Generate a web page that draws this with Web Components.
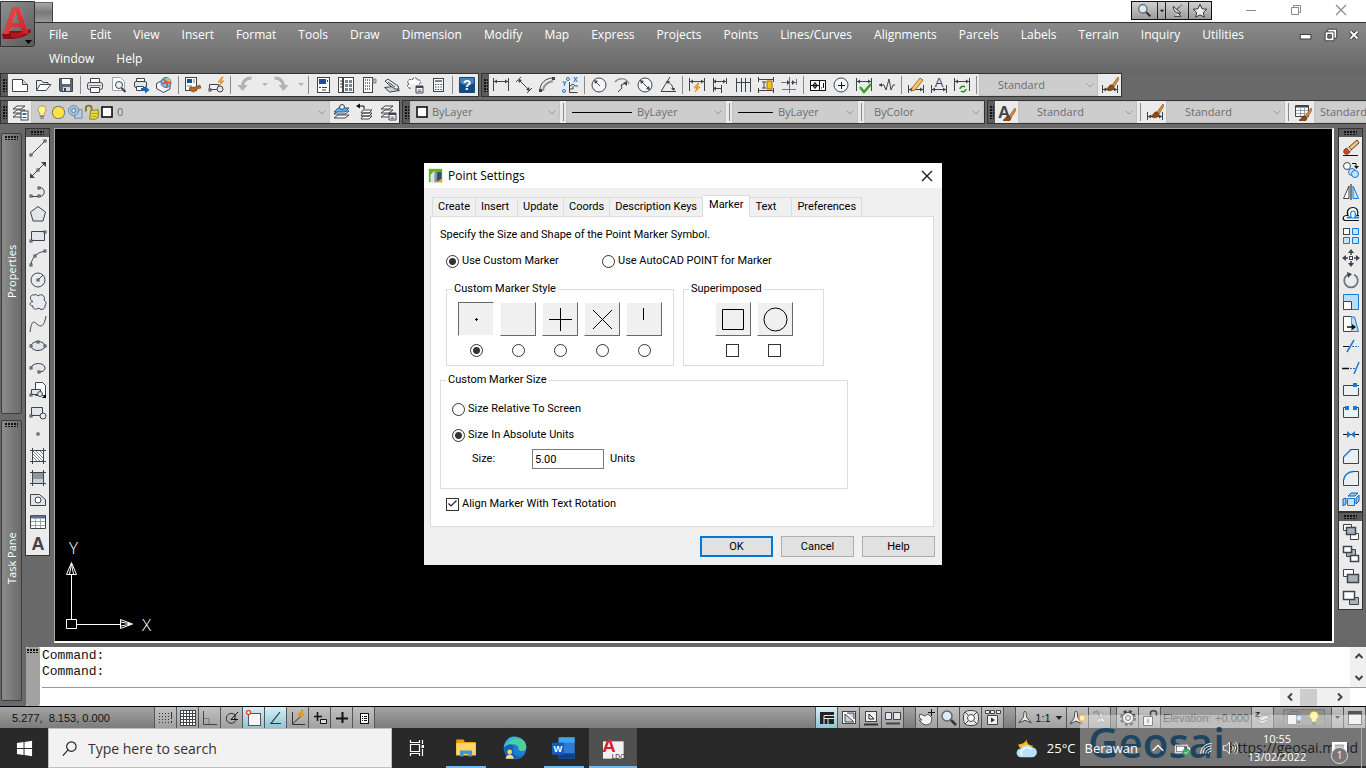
<!DOCTYPE html>
<html lang="en">
<head>
<meta charset="utf-8">
<title>Point Settings</title>
<style>
  html, body {
    height: 100%;
    margin: 0;
    overflow: hidden;
    background: #696969;
    font-family: "Open Sans", "Noto Sans", sans-serif;
    font-size: 12px;
  }
</style>
</head>
<body>
<cad-desktop></cad-desktop>

<script>
const INK = "#3f444c";
const BLUE = "#1a78d6";

// every drawing sits in an 18 x 18 box
const sq = (x, y) => `<rect x="${x - 1}" y="${y - 1}" width="2" height="2" fill="#fff" stroke="${INK}"/>`;
const brush = `<path d="M17 1l-6 8 2 2 5-8z" fill="#d98b3a" stroke="#6b3a12" stroke-width=".5"/><path d="M11 9c-3-1-3 3-6 4 2 3 8 2 8-2z" fill="#8a4a16" stroke="#53290a" stroke-width=".5"/>`;
const bolt = (x, y) => `<path d="M${x + 4} ${y}l-4 5h3l-2 4 5-5h-3l2-4z" fill="#ffb400" stroke="#d97400" stroke-width=".6"/>`;
const bulb = `<path d="M9 2a4.500 4.500 0 0 0-2.500 8.200V13h5v-2.800A4.500 4.500 0 0 0 9 2z" fill="#fff3a0" stroke="#b79a28"/><path d="M7 14h4M7 16h4" stroke="#555"/>`;
const sheets = `<path d="M6 3h8l-4 3H2zM6 7h8l-4 3H2zM6 11h8l-4 3H2z" fill="#fff" stroke="${INK}"/>`;
const miniPanel = `<path d="M10 10h7v7h-7z" fill="#fff" stroke="${INK}"/><path d="M10 11h7" stroke="${INK}" stroke-width="2"/><path d="M11.500 14h4M11.500 15.500h4" stroke="#6b7686"/>`;
const dimBase = `<path d="M1.500 2v13M16.500 2v13M2 5.500h14" stroke="${INK}"/><path d="M5 3.500v4l-3-2zM13 3.500v4l3-2z" fill="${INK}"/>`;
const dimLow = `<path d="M1.500 9v8M16.500 9v8M2 13.500h14" stroke="${INK}"/><path d="M5 11.500v4l-3-2zM13 11.500v4l3-2z" fill="${INK}"/>`;

const ICONS = {
  new: `<path d="M1.500 3.500h10l5 5v7h-15z" fill="#fff" stroke="${INK}"/><path d="M11.500 3.500v5h5" fill="#d5dae2" stroke="${INK}"/>`,
  open: `<path d="M2.500 14V4.500h5l1.500 2h5V9" fill="#e9edf2" stroke="${INK}"/><path d="M2.500 14.500l3.500-6h11l-5 6z" fill="#fff" stroke="${INK}"/>`,
  save: `<path d="M2.500 2.500h13v13h-12l-1-1z" fill="#5d6673" stroke="${INK}"/><path d="M5 3h8v5H5z" fill="#fff"/><path d="M6 11h7v4H6z" fill="#d5dae2"/><path d="M7 12h2v3H7z" fill="${INK}"/>`,
  print: `<path d="M4.500 7V2.500h9V7" fill="#fff" stroke="${INK}"/><rect x="1.500" y="6.500" width="15" height="7" rx="2" fill="#e2e5ea" stroke="${INK}"/><path d="M4.500 11.500h9v5h-9z" fill="#fff" stroke="${INK}"/><path d="M3 9.500h12" stroke="#7a828d"/>`,
  preview: `<path d="M3.500 1.500h8l4 4v9h-12z" fill="#fff" stroke="#9ba2ac"/><circle cx="10" cy="9" r="3.500" fill="#e8f2fa" stroke="${INK}"/><path d="M12.500 12l4 4" stroke="${INK}" stroke-width="2"/>`,
  publish: `<path d="M4.500 6V2.500h8V6" fill="#fff" stroke="${INK}"/><rect x="2.500" y="5.500" width="12" height="6" rx="1.500" fill="#e2e5ea" stroke="${INK}"/><path d="M4.500 10.500h7v4h-7z" fill="#fff" stroke="${INK}"/><path d="M9 12h4v-2l4.500 4-4.500 3.500V15H9z" fill="#1465c0"/>`,
  globe: `<path d="M1.500 7.500L8 4l7 4v5l-6.500 3.500-7-4z" fill="#f2f4f6" stroke="${INK}"/><circle cx="11" cy="6.500" r="5" fill="#6ec3e8" stroke="#2c7fa8"/><path d="M8 3c3 2 5 5 4 8M7 8c3-2 6-2 9-1" fill="none" stroke="#e0482c" stroke-width="1.500"/><path d="M12 2.500l3 3" stroke="#f6c628" stroke-width="2"/>`,
  match: `<rect x="1.500" y="1.500" width="11" height="13" fill="#fff" stroke="${INK}"/><path d="M3 3h5v4H3z" fill="#1b4f94"/><path d="M9 4h2M9 6h2M3 10h5" stroke="#6b7686"/><path d="M6 11h5l5-2 1 3-4 1c-2 4-5 4-8 0z" fill="#b8661c" stroke="#6b3a12" stroke-width=".5"/>`,
  blockedit: `<path d="M2.500 8.500h9v5h-9z" fill="#eef1f5" stroke="${INK}"/>${sq(3, 14)}<circle cx="13" cy="13" r="3" fill="#dfe4ea" stroke="${INK}"/>${bolt(11, 1)}`,
  undo: `<path d="M15.500 2C10 2 7 5 6.500 10" fill="none" stroke="#b2b2b2" stroke-width="3"/><path d="M1.500 9h10l-5 6z" fill="#b2b2b2"/>`,
  redo: `<path d="M2.500 2C8 2 11 5 11.500 10" fill="none" stroke="#b2b2b2" stroke-width="3"/><path d="M6.500 9h10l-5 6z" fill="#b2b2b2"/>`,
  drop: `<path d="M6 7h6l-3 3z" fill="#b0b4ba"/>`,
  palette: `<rect x="3.500" y="1.500" width="12" height="15" fill="#fff" stroke="${INK}"/><path d="M5 3h7v5H5z" fill="#1b4f94"/><path d="M13.500 4v2M5 11.500h2M8 11.500h5M8 14h4" stroke="${INK}"/>`,
  center: `<rect x="1.500" y="1.500" width="4" height="15" fill="#fff" stroke="${INK}"/><rect x="6.500" y="1.500" width="10" height="15" fill="#fff" stroke="${INK}"/><path d="M8 4h3v3H8zM12 4h3v3h-3zM8 8h3v3H8zM12 8h3v3h-3zM8 12h3v3H8zM12 12h3v3h-3z" fill="#7b8492"/><path d="M3 5h2M3 8h2M3 11h2" stroke="${INK}"/>`,
  toolpal: `<rect x="3.500" y="1.500" width="9" height="15" fill="#fff" stroke="${INK}"/><path d="M13 3h3v4h-3z" fill="#b9bfc8" stroke="#7a828d"/><path d="M5 4h6M5 7h6M5 10h6M5 13h6" stroke="#7b8492" stroke-width="2" stroke-dasharray="1 1"/>`,
  sheetset: `<path d="M1.500 11.500l9-1 6 4-10 1.500z" fill="#cdd3db" stroke="${INK}"/><path d="M2 5l3-2 10 7 1 3-4 0-7-5z" fill="#e9edf2" stroke="${INK}"/><path d="M5 6l7 5" stroke="${INK}"/>`,
  markup: `<path d="M3 8c-3-2 0-6 3-4 1-3 5-3 5 0 4-1 5 3 2 4M3 8c-3 1-1 5 2 4" fill="#fff" stroke="${INK}" stroke-dasharray="3 1"/>${miniPanel}`,
  calc: `<rect x="4.500" y="2.500" width="10" height="13" fill="#fff" stroke="${INK}"/><path d="M6 5h7" stroke="#7b8492" stroke-width="2"/><path d="M6 8.500h7M6 11h7M6 13.500h7" stroke="${INK}" stroke-dasharray="1.500 1.200"/>`,
  help: `<rect x="1" y="1" width="16" height="16" rx="1" fill="#134a82"/><path d="M2 2h14v5c-5 3-9 3-14 0z" fill="#3f82bf"/><text x="9" y="14" font-size="14" font-weight="700" text-anchor="middle" fill="#fff">?</text>`,

  dlinear: dimBase,
  daligned: `<path d="M1 6l5-5M12 17l5-5M4 4l10 10" stroke="${INK}"/><path d="M3 3l4 1-3 3zM15 15l-4-1 3-3z" fill="${INK}"/>`,
  darc: `<path d="M2 14C2 7 8 2 15 2" fill="none" stroke="${INK}"/><path d="M5 15C5 10 9 6 15 5" fill="none" stroke="#8b929c" stroke-width="2"/><path d="M1 13h3v3H1zM14 1h3v3h-3z" fill="${INK}"/>`,
  dord: `<path d="M8.500 6v10.500h8M9 10l3-2 2 2h3M8 13h4v-3" fill="none" stroke="${INK}"/><text x="1" y="10" font-size="7" font-weight="700" fill="${BLUE}">Y</text><text x="12" y="6" font-size="7" font-weight="700" fill="${BLUE}">X</text><circle cx="7" cy="3" r="1.500" fill="none" stroke="${BLUE}"/><circle cx="3" cy="15" r="1.500" fill="none" stroke="${BLUE}"/>`,
  dradius: `<circle cx="9" cy="9" r="7" fill="#f4f6f8" stroke="${INK}"/><path d="M5 5l5 5" stroke="${INK}"/><path d="M4 4l4 1-3 3z" fill="${INK}"/>`,
  djog: `<path d="M2 6C6 1 14 2 16 8" fill="none" stroke="#8b929c" stroke-width="1.500"/><path d="M5 16l4-4-1-3 5-2" fill="none" stroke="${INK}"/><path d="M14 5v5l-4-3z" fill="${INK}"/>`,
  ddiam: `<circle cx="9" cy="9" r="7" fill="#f4f6f8" stroke="${INK}"/><path d="M4 4l10 10" stroke="${INK}"/><path d="M4 4l4 1-3 3zM14 14l-4-1 3-3z" fill="${INK}"/>`,
  dang: `<path d="M11 1L2 15.500h15" fill="none" stroke="${INK}"/><path d="M8 6c4 1 6 4 6 8" fill="none" stroke="${INK}"/><path d="M7 5l4 0-2 3zM15 15l-3-3h4z" fill="${INK}"/>`,
  dquick: `${dimBase}${bolt(6, 7)}`,
  dbase: `<path d="M2.500 2v14M15.500 2v6M10.500 9v8M3 5.500h12M3 12.500h7" stroke="${INK}"/><path d="M5 3.500v4l-3-2zM12 3.500v4l3-2zM5 10.500v4l-3-2z" fill="${INK}"/>`,
  dcont: `<path d="M2.500 2v14M7.500 2v14M11.500 2v14M16.500 2v14M2 6.500h15" stroke="${INK}"/>`,
  dspace: `<path d="M1.500 1v5M16.500 1v5M2 3.500h14M1.500 12v5M16.500 12v5M2 14.500h14M5 6h4M5 12h4M7 6v6" stroke="${INK}"/><path d="M10 5h5v8h-5z" fill="#ffc21a" stroke="#a56a00"/>`,
  dbreak: `<path d="M1 6.500h6M11 6.500h6M2 13.500h14M9.500 1v16M16.500 3v6" stroke="#6e757f"/><path d="M7 4v5l3-2.500zM12 4v5l3-2.500z" fill="${INK}"/>`,
  tol: `<rect x="1.500" y="4.500" width="15" height="10" fill="#fff" stroke="#111"/><path d="M10.500 5v9M2 9.500h8M6 6v7M14.500 7v5M12 12h1" stroke="#111"/><circle cx="6" cy="9.500" r="2" fill="none" stroke="#111"/>`,
  cmark: `<circle cx="9" cy="9" r="7" fill="#f4f6f8" stroke="${INK}"/><path d="M6 9.500h7M9.500 6v7" stroke="#111"/>`,
  inspect: `${dimBase}<path d="M5 11l4 5 7-8" fill="none" stroke="#3aa51f" stroke-width="2.500"/>`,
  jogline: `<path d="M1 9h5l2 5 3-11 2 11 2-5h2" fill="none" stroke="${INK}"/><path d="M1 9l3-2v4z" fill="${INK}"/>`,
  dedit: `${dimLow}<path d="M5 12l8-10 3 2-8 10-4 1z" fill="#ffc860" stroke="#8a4a16" stroke-width=".8"/>`,
  dtext: `${dimLow}<text x="9" y="11" font-size="13" text-anchor="middle" fill="${INK}">A</text>`,
  dupdate: `${dimBase}<path d="M7 13a3 3 0 0 1 5-2M13 13a3 3 0 0 1-5 2" fill="none" stroke="#2c8a1c" stroke-width="1.500"/>`,
  dstyle: `${dimLow}${brush}`,
  tstyle: `<text x="0" y="15" font-size="17" font-weight="700" fill="${INK}">A</text><g transform="translate(0 4)">${brush}</g>`,
  tabstyle: `<path d="M1.500 2.500h13v11h-13z" fill="#fff" stroke="${INK}"/><path d="M1.500 3.500h13" stroke="${INK}" stroke-width="2"/><path d="M2 7.500h12M2 10.500h12M6.500 4v9M10.500 4v9" stroke="#9aa2ad"/><g transform="translate(0 4)">${brush}</g>`,

  layers: `${sheets}<rect x="10" y="8" width="7" height="9" fill="#fff" stroke="${INK}"/><path d="M11.500 10h4v2h-4z" fill="${BLUE}"/><path d="M11.500 14.500h4" stroke="${INK}"/>`,
  layobj: `<path d="M5 8h11l-4 3H1zM5 12h11l-4 3H1z" fill="#fff" stroke="${INK}"/><path d="M5 5h11l-4 4H1z" fill="#5fb1ee" stroke="#1563a8"/><circle cx="9" cy="4" r="2.500" fill="#e8ebef" stroke="${INK}"/>`,
  layprev: `<path d="M7 7h9l-3 3H5zM7 10h9l-3 3H5zM7 13h9l-3 3H5z" fill="#fff" stroke="${INK}"/><path d="M1 3h7v3" fill="none" stroke="#111"/><path d="M0 3l4-2.500v5z" fill="#111"/>`,
  laystate: sheets + miniPanel,
  bulb,
  sun: `<circle cx="9" cy="9" r="6.500" fill="#ffe23c" stroke="#4f6f8e"/><path d="M3 3l2 2M15 3l-2 2M3 15l2-2M15 15l-2-2" stroke="#e0a800"/>`,
  freeze: `<path d="M8 6h8v9H8z" fill="#b9cfe0" stroke="#6c8aa5"/><circle cx="7" cy="7" r="5.500" fill="#9dbdd6" stroke="#54799b" stroke-dasharray="2 1"/><circle cx="7" cy="7" r="2" fill="#dce9f3" stroke="#54799b"/>`,
  lock: `<path d="M2 8V4c0-3 6-3 6 0v2" fill="none" stroke="#7d7a13" stroke-width="2"/><path d="M7 7l8-1v8l-3 2H6z" fill="#e4df3b" stroke="#7d7a13"/><path d="M8 10h6M8 13h5" stroke="#a39f1e"/>`,
  swatch: `<rect x="4" y="4" width="10" height="10" fill="#fff" stroke="#000" stroke-width="1.500"/>`,

  line: `<path d="M3 15L15 3" stroke="${INK}"/>${sq(2, 16)}${sq(16, 2)}`,
  xline: `<path d="M3 15L15 3" stroke="${INK}"/>${sq(9, 9)}<path d="M17 1v5l-5-5zM1 17v-5l5 5z" fill="${INK}"/>`,
  pline: `<path d="M2 13.500h8c7 0 7-9 0-9" fill="none" stroke="${INK}"/>${sq(2, 13)}${sq(10, 13)}${sq(10, 5)}`,
  polygon: `<path d="M9 1.500l7.500 5.500-2.500 9H4L1.500 7z" fill="#e2e6eb" stroke="${INK}"/>`,
  rect: `<path d="M2.500 4.500h13v9h-13z" fill="#e2e6eb" stroke="${INK}"/>${sq(16, 5)}${sq(2, 14)}`,
  arc: `<path d="M2 15C3 9 8 3 15 2.500" fill="none" stroke="${INK}"/>${sq(2, 16)}${sq(6, 7)}${sq(16, 2)}`,
  circle: `<circle cx="9" cy="9" r="7" fill="#e8ebef" stroke="${INK}"/><path d="M9 9l5-5" stroke="${INK}"/>${sq(9, 9)}`,
  cloud: `<path d="M4 8.500C0 7 1 1 5 2c2-1 3 0 4 1 3-3 8 0 6 4 3 2 2 5 1 5 1 4-4 6-6 3-3 2-7 1-6-2-4 0-4-4 0-4.500z" fill="#e8ebef" stroke="${INK}"/>`,
  spline: `<path d="M1 17C3 2 6 8 9 10s6 2 8-9" fill="none" stroke="${INK}"/>`,
  ellipse: `<ellipse cx="9" cy="9" rx="7" ry="4.500" fill="#e2e6eb" stroke="${INK}"/>${sq(2, 9)}${sq(16, 9)}${sq(9, 5)}`,
  earc: `<path d="M2 9c1-6 14-6 14 0 0 3-3 4-7 4" fill="#e2e6eb" stroke="${INK}"/>${sq(2, 9)}${sq(10, 13)}`,
  insert: `<path d="M6.500 1.500h7l3 3v10h-10z" fill="#fff" stroke="${INK}"/><path d="M2.500 8.500h9v5h-9z" fill="#e2e6eb" stroke="${INK}"/><circle cx="11" cy="13" r="2.500" fill="#dfe4ea" stroke="${INK}"/>${sq(2, 14)}<path d="M17 13v4h-4z" fill="#000"/>`,
  block: `<path d="M2.500 4.500h11v8h-11z" fill="#e2e6eb" stroke="${INK}"/><circle cx="14" cy="13" r="3" fill="#e8ebef" stroke="${INK}"/>${sq(2, 13)}`,
  point: sq(9, 9),
  hatch: `<path d="M4 4h10v10H4z" fill="#fff"/><path d="M4 7l7 7M4 4l10 10M7 4l7 7M4 10l4 4M11 4l3 3" stroke="#7b8492"/><path d="M3.500 1v16M14.500 1v16M1 3.500h16M1 14.500h16" stroke="${INK}"/>`,
  gradient: `<path d="M4 4h10v10H4z" fill="#8d959f"/><path d="M4 10h10v4H4z" fill="#c9ced5"/><path d="M3.500 1v16M14.500 1v16M1 3.500h16M1 14.500h16" stroke="${INK}"/>`,
  region: `<path d="M1.500 3.500h9l6 5v6h-15z" fill="#e2e6eb" stroke="${INK}"/><circle cx="9" cy="9" r="3" fill="#fff" stroke="${INK}"/>`,
  table: `<path d="M1.500 2.500h15v13h-15z" fill="#fff" stroke="${INK}"/><path d="M2 4h14" stroke="#5a6f8c" stroke-width="3"/><path d="M2 8.500h14M2 12.500h14M6.500 6v9M11.500 6v9" stroke="#9aa2ad"/>`,
  mtext: `<text x="9" y="15" font-size="18" font-weight="700" text-anchor="middle" fill="${INK}">A</text>`,

  erase: `<path d="M1 16.500h15" stroke="#111"/><path d="M15 1l2 3-8 7-2-3z" fill="#f4c27c" stroke="#6b3a12"/><path d="M7 8l2 3-1 2-3-4z" fill="#eee" stroke="#555" stroke-width=".5"/><path d="M4 9l4 4-2 2c-3 1-5-1-4-4z" fill="#d2491d" stroke="#6b1f0a" stroke-width=".7"/>`,
  copy: `<circle cx="5" cy="5" r="3.500" fill="#fff" stroke="${INK}"/><circle cx="10" cy="11" r="3.500" fill="#c5e3f8" stroke="${BLUE}"/><circle cx="13" cy="13" r="3.500" fill="#c5e3f8" stroke="${BLUE}"/><path d="M10 2.500h4V5" fill="none" stroke="#111"/><path d="M12 5h5l-2.500 3z" fill="#111"/>`,
  mirror: `<path d="M1.500 15.500H7V3z" fill="#fff" stroke="${INK}"/><path d="M16.500 15.500H11V3z" fill="#c5e3f8" stroke="${BLUE}"/><path d="M9 1v16" stroke="#111"/>`,
  offset: `<path d="M17 15.500H3c-3-1-2-5 1-5h2c-2-5 1-8 5-8s6 4 4 8h2" fill="#fff" stroke="#111" stroke-width="1.200"/><path d="M17 13H6c-1 0-1-1 0-1h3c-1-4 0-6 2-6s3 2 2 6h4" fill="none" stroke="${BLUE}" stroke-width="1.200"/>`,
  array: `<rect x="1.500" y="1.500" width="6" height="6" fill="#fff" stroke="${INK}"/><path d="M10.500 1.500h6v6h-6zM1.500 10.500h6v6h-6zM10.500 10.500h6v6h-6z" fill="#c5e3f8" stroke="${BLUE}"/>`,
  move: `<path d="M9 2v14M2 9h14" stroke="${INK}" stroke-width="1.500" stroke-dasharray="4 6"/><path d="M9 0l3 4H6zM9 18l3-4H6zM0 9l4-3v6zM18 9l-4-3v6z" fill="${INK}"/><rect x="7.500" y="7.500" width="3" height="3" fill="#fff" stroke="${INK}"/>`,
  rotate: `<path d="M12 3.500A6.800 6.800 0 1 1 6 3.500" fill="none" stroke="#6e757f" stroke-width="1.800"/><path d="M5 1l5 2-4 4z" fill="${INK}"/>`,
  scale: `<path d="M1.500 1.500h15v15h-15z" fill="#b9def5" stroke="${BLUE}"/><path d="M1.500 8.500h8v8h-8z" fill="#fff" stroke="${INK}"/>`,
  stretch: `<path d="M1.500 1.500h8v15h-8z" fill="#fff" stroke="${INK}"/><path d="M9.500 2h3l4 14.500h-7" fill="#b9def5" stroke="${BLUE}"/><path d="M5 12h6" stroke="#111" stroke-width="1.500"/><path d="M10 9l4 3-4 3z" fill="#111"/>`,
  trim: `<path d="M1 9.500h6" stroke="#111"/><path d="M10 9.500h7" stroke="${BLUE}" stroke-dasharray="2 1"/><path d="M5 15l7-12" stroke="${BLUE}" stroke-width="1.500"/>`,
  extend: `<path d="M0 9.500h7" stroke="#111" stroke-width="1.500"/><path d="M8 9.500h5" stroke="${BLUE}" stroke-dasharray="2 1"/><path d="M12 15l5-12" stroke="${BLUE}" stroke-width="1.500"/>`,
  breakpt: `<path d="M17 4.500H1.500v10h15V7" fill="#eef1f4" stroke="${INK}"/><path d="M11 2h4v4h-4z" fill="${BLUE}"/>`,
  breaks: `<path d="M3 4.500H1.500v10h15v-10H15" fill="#eef1f4" stroke="${INK}"/><path d="M3 3h4v4H3zM11 3h4v4h-4z" fill="${BLUE}"/>`,
  join: `<path d="M1 9.500h16" stroke="#111"/><path d="M5 6l4 3.500L5 13zM13 6L9 9.500l4 3.500z" fill="${BLUE}"/>`,
  chamfer: `<path d="M8 2.500h8.500v14h-15V10" fill="#eceff2" stroke="${INK}"/><path d="M1.500 10L9 2.500" stroke="${BLUE}" stroke-width="1.500"/>`,
  fillet: `<path d="M11 2.500h5.500v14h-15V11" fill="#eceff2" stroke="${INK}"/><path d="M1.500 11c1-5 4-8 10-8.500" fill="none" stroke="${BLUE}" stroke-width="1.500"/>`,
  explode: `<path d="M5.500 7.500h7v7h-7z" fill="#c5e3f8" stroke="${BLUE}"/><path d="M1 8l3-1v6l-3 2zM6 5l3-3h7l-3 3zM14 7l3-3v6l-3 3z" fill="#8fcdf3" stroke="#1563a8"/>`,
  front: `<path d="M1.500 1.500h8v6h-8zM8.500 10.500h8v6h-8z" fill="#fff" stroke="${INK}"/><path d="M4.500 4.500h9v7h-9z" fill="#aab1ba" stroke="${INK}" stroke-width="1.500"/>`,
  back: `<path d="M4.500 4.500h9v7h-9z" fill="#aab1ba" stroke="${INK}"/><path d="M1.500 1.500h8v6h-8zM8.500 10.500h8v6h-8z" fill="#fff" stroke="${INK}" stroke-width="1.500"/>`,
  above: `<path d="M1.500 2.500h10v7h-10z" fill="#fff" stroke="${INK}"/><path d="M5.500 7.500h11v8h-11z" fill="#aab1ba" stroke="${INK}" stroke-width="1.500"/>`,
  under: `<path d="M7.500 8.500h9v7h-9z" fill="#aab1ba" stroke="${INK}"/><path d="M1.500 2.500h11v8h-11z" fill="#fff" stroke="${INK}" stroke-width="1.500"/>`,

  snap: `<path d="M2 4.500h10M2 7.500h10M2 10.500h10M2 13.500h10" stroke="#333" stroke-dasharray="1 2"/><path d="M14.500 3v11" stroke="#333" stroke-dasharray="7 2"/>`,
  grid: `<rect x="1.500" y="1.500" width="15" height="15" fill="#fff" stroke="${INK}"/><path d="M4.500 2v14M7.500 2v14M10.500 2v14M13.500 2v14M2 4.500h14M2 7.500h14M2 10.500h14M2 13.500h14" stroke="${INK}"/>`,
  ortho: `<path d="M2.500 2v13.500H16" fill="none" stroke="${INK}"/><path d="M3 9.500h5V15" fill="none" stroke="#6b7f94"/>`,
  polar: `<path d="M13 11a5 5 0 1 1-1-5" fill="none" stroke="#333"/><path d="M15 3L8 10.500h7M12 6v5" fill="none" stroke="#111"/>`,
  osnap: `<rect x="3.500" y="4.500" width="12" height="12" fill="#f4f7f9" stroke="#555"/><circle cx="3.500" cy="3.500" r="2" fill="#fff" stroke="#e2561b" stroke-width="1.500"/>`,
  otrack: `<path d="M13 3L4 14.500h10" fill="none" stroke="#1a3a48" stroke-width="1.200"/>`,
  ducs: `<path d="M3.500 3v12.500H16M3.500 15L14 5" fill="none" stroke="#333"/>${bolt(9, 1)}`,
  dyn: `<path d="M3 7.500h8M6.500 3v9" stroke="#111" stroke-width="1.500"/><path d="M9.500 10.500h6v4h-6z" fill="#ddd" stroke="#111"/>`,
  lwt: `<path d="M3 9.500h12M9.500 3v11" stroke="#111" stroke-width="2"/>`,
  qp: `<rect x="5.500" y="4.500" width="8" height="10" fill="#fff" stroke="#111"/><path d="M7 7.500h5M7 9.500h5M7 11.500h5" stroke="#111" stroke-dasharray="1 1 3 1"/>`,
  model: `<rect x="2" y="3" width="14" height="12" fill="#222"/><path d="M6 15V6.500h10M10 15V9.500h6M6 9.500h4" fill="none" stroke="#e8e8e8"/>`,
  layout: `<rect x="2.500" y="2.500" width="13" height="12" fill="#fff" stroke="${INK}"/><path d="M5 5l9 8H5zM7 4h7v6" fill="#cdd3db" stroke="${INK}"/>`,
  qlayout: `<rect x="3.500" y="2.500" width="11" height="10" fill="#eee" stroke="${INK}"/><path d="M7 5v5h5z" fill="#fff" stroke="#222"/><path d="M2 15.500h14" stroke="#333" stroke-width="2"/>`,
  qdraw: `<path d="M1.500 3.500h6v7h-6zM9.500 3.500h7v7h-7z" fill="#e4e6e9" stroke="${INK}"/><path d="M2 14.500h14" stroke="${INK}" stroke-width="2"/>`,
  pan: `<path d="M2 5l5 2 3-2 4 4-1 5c-4 3-8 2-10-1l-2-2 3 0-3-3z" fill="#f2f2f2" stroke="#555"/><path d="M13.500 0v7M10 3.500h7" stroke="#111"/>`,
  zoom: `<circle cx="7" cy="7" r="5" fill="#d9ecf5" stroke="#666" stroke-width="1.500"/><path d="M11 11l5 5" stroke="#333" stroke-width="2.500"/>`,
  wheel: `<path d="M9 1.500c6 0 7.500 2 7.500 7.500S15 16.500 9 16.500 1.500 15 1.500 9 3 1.500 9 1.500z" fill="#e6e8ea" stroke="${INK}"/><circle cx="9" cy="9" r="3.500" fill="#fff" stroke="${INK}"/><path d="M3 3l3 3M15 3l-3 3M3 15l3-3M15 15l-3-3" stroke="${INK}"/>`,
  motion: `<path d="M1.500 1.500h4v3h-4zM6.500 1.500h4v3h-4zM12.500 1.500h4v3h-4zM3.500 6.500h10v9h-10z" fill="#f0f0f0" stroke="${INK}"/><path d="M7 8.500l4 2.500-4 2.500z" fill="#333"/>`,
  scalefig: `<path d="M9 1.500c2 0 1 5 2 7l5 6-7-3-7 3 5-6c1-2 0-7 2-7z" fill="#eee" stroke="#333"/>`,
  annovis: `<path d="M7 2c2 0 1 5 2 7l4 6-6-3-6 3 4-6c1-2 0-7 2-7z" fill="#eee" stroke="#444"/><circle cx="13" cy="9" r="3" fill="#ffe9a8" stroke="#f2a12c" stroke-width="1.500"/>`,
  annoauto: `<path d="M10 3c2 0 1 4 2 6l4 6-6-3-6 3 4-6c1-2 0-6 2-6z" fill="#ddd" stroke="#999"/><path d="M2 4l4-2 4 8" fill="none" stroke="#999" stroke-width="2"/>`,
  gear: `<circle cx="9" cy="9" r="6.500" stroke="#444" stroke-width="3" stroke-dasharray="3 2.100"/><circle cx="9" cy="9" r="5.500" fill="#eee" stroke="#444"/><circle cx="9" cy="9" r="2.500" fill="#ddd" stroke="#444"/>`,
  unlock: `<path d="M2.500 7.500h9v9h-9z" fill="#eee" stroke="#444"/><path d="M9.500 7V4c0-3 6-3 6 0v3" fill="none" stroke="#444" stroke-width="1.500"/><path d="M7 10v4" stroke="#444"/>`,
  zstack: `<path d="M3 9l9-3 5 2-9 4zM3 12l5 3 9-4" fill="#ddd" stroke="#888"/><text x="1" y="8" font-size="8" font-weight="700" fill="#111">Z</text>`,
  annsheets: `<path d="M2.500 5.500h9v10h-9z" fill="#eee" stroke="#777"/><path d="M5 5V2.500h8V9" fill="none" stroke="#777"/><circle cx="14" cy="9" r="2.500" fill="#cfe6f8" stroke="#6fa9d6"/><path d="M13 13h2" stroke="#555" stroke-width="2"/>`,
  cleanscr: `<rect x="2.500" y="2.500" width="13" height="13" fill="#eee" stroke="#555"/><path d="M3 4h12" stroke="#555" stroke-width="3"/>`,
  darkdrop: `<path d="M4 6h10l-5 6z" fill="#222"/>`,

  star: `<path d="M9 1.500l2.300 5 5.400.5-4 3.700 1.200 5.300L9 13.300 4.100 16l1.200-5.300-4-3.700 5.400-.5z" fill="#eee" stroke="#222"/>`,
  dish: `<path d="M4 4c0 6 4 9 9 8zM8 8l5-5M5 16h8l-3-4M14 2l1 1" fill="#ddd" stroke="#222"/>`,
  min: `<path d="M4 9.500h10" stroke="#8a8a8a"/>`,
  restore: `<path d="M4.500 6.500h7v7h-7zM6.500 6V4.500h7v7H12" fill="none" stroke="#8a8a8a"/>`,
  close: `<path d="M4 4l10 10M14 4L4 14" stroke="#8a8a8a" stroke-width="1.200"/>`,
  closedark: `<path d="M4 4l10 10M14 4L4 14" stroke="#111" stroke-width="1.200"/>`,
  mdimin: `<rect x="2.500" y="8.500" width="12" height="5" fill="#fff" stroke="#333"/>`,
  mdirest: `<path d="M6.500 2.500h10v10h-10z" fill="#fff" stroke="#333"/><path d="M3.500 5.500h10v10h-10z" fill="#fff" stroke="#333"/><path d="M6.500 8.500h4v4h-4z" fill="#777" stroke="#333"/>`,
  mdiclose: `<path d="M4.500 4.500l9 9M13.500 4.500l-9 9" stroke="#333" stroke-width="5"/><path d="M4.500 4.500l9 9M13.500 4.500l-9 9" stroke="#fff" stroke-width="2.500"/>`,
  up: `<path d="M5.500 11L9 7.500l3.500 3.500" fill="none" stroke="#444" stroke-width="2"/>`,
  down: `<path d="M5.500 7L9 10.500 12.500 7" fill="none" stroke="#444" stroke-width="2"/>`,
  left: `<path d="M11 5.500L7.500 9l3.500 3.500" fill="none" stroke="#444" stroke-width="2"/>`,
  right: `<path d="M7 5.500l3.500 3.500L7 12.500" fill="none" stroke="#444" stroke-width="2"/>`,

  pointapp: `<path d="M1 1h16v16H1z" fill="#6fae14"/><path d="M3 8l5-5v14H3z" fill="#dbe3ec"/><path d="M8 3l3 3v11H8z" fill="#8794a8"/><path d="M11 5h5v11h-5z" fill="#2d4a78"/><path d="M10 17l7-5v5z" fill="#e0a72a"/>`,

  windows: `<path d="M1 3.200l7-1v6.300H1zM9 2l8-1.200v7.700H9zM1 9.500h7v6.300l-7-1zM9 9.500h8v7.700L9 16z" fill="#fff"/>`,
  search: `<circle cx="11" cy="7" r="5" fill="none" stroke="#222" stroke-width="1.200"/><path d="M7.500 10.500L2 16.500" stroke="#222" stroke-width="1.200"/>`,
  taskview: `<path d="M2.500 5.500h9v7h-9zM2.500 1v2.500h9V1M2.500 17v-2.500h9V17M14.500 1v4M14.500 10v7" fill="none" stroke="#fff" stroke-width="1.200"/><path d="M13.500 6h2.500v3h-2.500z" fill="#fff"/>`,
  folder: `<path d="M1 2h6l1 2h9v11H1z" fill="#e9a50c"/><path d="M1 5h16v10H1z" fill="#ffd667"/><path d="M4 16v-5h10v5h-3v-2H7v2z" fill="#3c98d8"/>`,
  edge: `<circle cx="9" cy="9" r="8.500" fill="#1b7fd0"/><path d="M1 8C2 0 17-2 17.500 8c0 4-5 4-6 2 1-4-6-5-10.500-2z" fill="#4ccf9a"/><path d="M1 7C3 0 9-1 13 2 7 2 4 4 1 8z" fill="#35b5dc"/><path d="M1 9c3-4 7-3 7 0-2 4 2 7 6 6-6 5-13 1-13-6z" fill="#1560b0"/><circle cx="5" cy="12" r="1.800" fill="#ffd94a"/><path d="M2 17c0-4 6-4 6 0z" fill="#f3e08a"/>`,
  word: `<path d="M5 1h12v16H5z" fill="#2b7cd3"/><path d="M5 1h12v4H5z" fill="#41a5ee"/><path d="M5 13h12v4H5z" fill="#103f91"/><path d="M0 5h9v9H0z" fill="#185abd"/><text x="4.500" y="12" font-size="7" font-weight="700" text-anchor="middle" fill="#fff">W</text>`,
  ldc: `<path d="M1.500 4H17v13H1.500z" fill="#f1f1f1"/><text x="6" y="12" font-size="14" font-weight="700" text-anchor="middle" fill="#d3232a">A</text><text x="8" y="17" font-size="5" fill="#222">LDC</text>`,
  weather: `<path d="M9 1c-1 3 1 6 5 6-2 5-12 4-12-1C4 6 8 5 9 1z" fill="#f6b81c"/><path d="M4 16.500a3.500 3.500 0 0 1 0-7 4.500 4.500 0 0 1 8-1 4 4 0 0 1 2 8z" fill="#b9e0f7"/><path d="M5 15a3 3 0 0 1 1-5 5 5 0 0 1 7 0" fill="none" stroke="#e8f6ff" stroke-width="1.500"/>`,
  trayup: `<path d="M3 12l6-6 6 6" fill="none" stroke="#fff" stroke-width="1.500"/>`,
  battery: `<path d="M1.500 5.500h13v8h-13z" fill="none" stroke="#fff"/><path d="M3 7h8v5H3zM15 8h2v3h-2z" fill="#fff"/><circle cx="13" cy="13" r="4" fill="#3fa45c"/><path d="M11 13l1.500 1.500L15 12" fill="none" stroke="#fff"/>`,
  wifi: `<path d="M2 15C2 8 8 3 15 3M5 15c0-5 4-9 10-9M8 15c0-3 3-6 7-6M11 15c0-2 2-3 4-3" fill="none" stroke="#fff" stroke-width="1.200"/>`,
  sound: `<path d="M1.500 6.500h3l4-4v13l-4-4h-3z" fill="none" stroke="#fff"/><path d="M11 6c2 2 2 4 0 6M13 4c3 3 3 7 0 10M15 2c4 4 4 10 0 14" fill="none" stroke="#fff"/>`,
  notice: `<path d="M1 2h16v11h-5l-3 4v-4H1z" fill="#fff"/><path d="M4 5.500h10M4 7.500h10M4 9.500h7" stroke="#777"/>`
};

const svg = (name, size = 18) =>
  `<svg width="${size}" height="${size}" viewBox="0 0 18 18" fill="none" font-family="Liberation Sans, sans-serif" aria-hidden="true">${ICONS[name] || ""}</svg>`;

const GRIP_DOTS = "radial-gradient(circle at 1px 1px, #111 1px, transparent 1px) 0 0 / 3px 3px";

function define(tag, render, ready) {
  customElements.define(tag, class extends HTMLElement {
    constructor() {
      super();
      this.attachShadow({ mode: "open" });
    }

    connectedCallback() {
      if (this.shadowRoot.childNodes.length) return;
      const template = document.createElement("template");
      template.innerHTML = render(this);
      this.shadowRoot.appendChild(template.content.cloneNode(true));
      if (ready) ready(this.shadowRoot, this);
    }
  });
}

// a row of icon buttons from a space separated list
const tools = list => list.split(" ").map(name =>
  name === "|" ? "<tool-sep></tool-sep>" : `<tool-button icon="${name}"></tool-button>`
).join("");

define("cad-icon", el => `
  <style>:host { display: block; flex: none; } svg { display: block; }</style>
  ${svg(el.getAttribute("name"), el.getAttribute("size") || 18)}
`);

define("tool-button", el => `
  <style>
    :host { display: block; flex: none; width: 23px; height: 22px; }
    :host([icon="drop"]) { width: 13px; }
    button {
      display: grid;
      place-items: center;
      width: 100%;
      height: 100%;
      padding: 0;
      border: 0;
      background: none;
      overflow: hidden;
    }
    button:hover { background: #cfe3f5; }
    svg { display: block; }
  </style>
  <button type="button" aria-label="${el.getAttribute("icon")}">${svg(el.getAttribute("icon"))}</button>
`);

define("tool-sep", () => `
  <style>
    :host { display: flex; flex: none; justify-content: center; width: 6px; padding: 2px 0; box-sizing: border-box; }
    i { width: 1px; background: #8a8a8a; }
  </style><i></i>
`);

define("tool-bar", () => `
  <style>
    :host {
      display: flex;
      flex: none;
      box-sizing: border-box;
      height: 24px;
      border: 1px solid #333;
      background: #ebebeb;
    }
    :host([vertical]) { flex-direction: column; width: 25px; height: auto; }
    .grip { flex: none; display: grid; place-items: center; width: 7px; background: #5c5c5c; }
    .grip::before { content: ""; width: 4px; height: 13px; background: ${GRIP_DOTS}; }
    :host([vertical]) .grip { width: auto; height: 8px; }
    :host([vertical]) .grip::before { width: 13px; height: 4px; }
  </style>
  <div class="grip"></div>
  <slot></slot>
`);

define("tool-combo", el => `
  <style>
    :host {
      display: flex;
      flex: none;
      align-items: center;
      box-sizing: border-box;
      height: 22px;
      padding: 0 3px 0 5px;
      border: 1px solid #c2c2c2;
      background: #cdcdcd;
    }
    select {
      appearance: none;
      flex: 1;
      min-width: 0;
      height: 18px;
      padding: 0 0 1px;
      border: 0;
      background: none;
      color: #6d6d6d;
      font: 11px/17px "Open Sans", "Noto Sans", sans-serif;
      opacity: 1;
    }
    svg { flex: none; }
  </style>
  <slot></slot>
  <select aria-label="${el.getAttribute("label")}"><option>${el.getAttribute("value")}</option></select>
  <svg width="8" height="5" viewBox="0 0 8 5"><path d="M.5.5L4 4 7.500.5" fill="none" stroke="#9a9a9a"/></svg>
`);

define("title-bar", () => `
  <style>
    :host {
      display: flex;
      align-items: flex-start;
      height: 22px;
      background: #fff;
      border-bottom: 1px solid #333;
    }
    .quick {
      width: 19px;
      height: 20px;
      margin: 2px auto 0 34px;
      border-right: 1px solid #444;
      border-top: 1px solid #666;
      background: linear-gradient(#a9a9a9, #7a7a7a 50%, #999);
      box-sizing: border-box;
    }
    .info {
      display: flex;
      margin-top: 1px;
      border: 1px solid #111;
      background: linear-gradient(#d0d0d0, #9c9c9c);
    }
    .info button, .window button {
      display: grid;
      place-items: center;
      height: 17px;
      padding: 0;
      border: 0;
      background: none;
      overflow: hidden;
    }
    .info button { width: 23px; border-left: 1px solid #222; }
    .info button:first-child { width: 25px; border-left: 0; }
    .info .narrow { width: 8px; }
    .window { display: flex; margin: 1px 3px 0 16px; }
    .window button { width: 45px; height: 18px; }
  </style>
  <div class="quick"></div>
  <div class="info">
    <button type="button" aria-label="Search">${svg("zoom", 15)}</button>
    <button type="button" class="narrow" aria-label="More">${svg("darkdrop", 8)}</button>
    <button type="button" aria-label="Communication">${svg("dish", 15)}</button>
    <button type="button" aria-label="Favorites">${svg("star", 16)}</button>
  </div>
  <div class="window">
    <button type="button" aria-label="Minimize">${svg("min")}</button>
    <button type="button" aria-label="Restore">${svg("restore")}</button>
    <button type="button" aria-label="Close">${svg("close")}</button>
  </div>
`);

const MENUS = ["File", "Edit", "View", "Insert", "Format", "Tools", "Draw", "Dimension", "Modify", "Map",
  "Express", "Projects", "Points", "Lines/Curves", "Alignments", "Parcels", "Labels", "Terrain",
  "Inquiry", "Utilities", "Window", "Help"];

define("menu-bar", () => `
  <style>
    :host {
      display: flex;
      align-items: flex-start;
      height: 50px;
      background: linear-gradient(#8a8a8a, #666);
    }
    nav { display: flex; flex-wrap: wrap; flex: 1; padding: 0 24px 0 38px; }
    nav button {
      height: 24px;
      padding: 0 11px 2px;
      border: 0;
      background: none;
      color: #fff;
      font: 12px "Open Sans", "Noto Sans", sans-serif;
    }
    .doc { display: flex; }
    .doc button { display: grid; place-items: center; width: 24px; height: 24px; padding: 0; border: 0; background: none; }
  </style>
  <nav>${MENUS.map(m => `<button type="button">${m}</button>`).join("")}</nav>
  <div class="doc">
    <button type="button" aria-label="Minimize drawing">${svg("mdimin", 16)}</button>
    <button type="button" aria-label="Restore drawing">${svg("mdirest", 16)}</button>
    <button type="button" aria-label="Close drawing">${svg("mdiclose", 14)}</button>
  </div>
`);

define("app-logo", () => `
  <style>
    :host {
      display: block;
      width: 33px;
      height: 44px;
      border: 1px solid #333;
      border-radius: 0 0 3px 0;
      background: linear-gradient(135deg, #8f8f8f, #5a5a5a);
    }
    svg { display: block; overflow: visible; }
  </style>
  <svg width="33" height="44" viewBox="0 0 33 44" font-family="Liberation Sans, sans-serif" aria-hidden="true">
    <defs><linearGradient id="red" x2="1" y2="1"><stop offset="0" stop-color="#f2555b"/><stop offset="1" stop-color="#c8141b"/></linearGradient></defs>
    <path d="M1 32l5-3h18l6-2-1 4c-8 6-17 6-27 6z" fill="#8a0f14"/>
    <path d="M10 30c4 2 9 1 12-1l1 4c-4 2-8 3-13 2z" fill="#b3161c"/>
    <text x="15" y="32" font-size="38" font-weight="700" text-anchor="middle" fill="url(#red)">A</text>
    <path d="M24 38h7l-3.500 4z" fill="#000"/>
  </svg>
`);

define("side-palette", () => `
  <style>
    :host {
      display: flex;
      flex-direction: column;
      align-items: center;
      flex: 1;
      box-sizing: border-box;
      width: 21px;
      padding: 2px 0 10px;
      border: 1px solid #3c3c3c;
      border-radius: 2px;
      background: linear-gradient(90deg, #8c8c8c, #6a6a6a);
    }
    i { width: 13px; height: 4px; background: ${GRIP_DOTS}; }
    span {
      flex: 1;
      writing-mode: vertical-rl;
      transform: rotate(180deg);
      text-align: center;
      color: #fff;
      font-size: 11px;
      line-height: 16px;
    }
  </style>
  <i></i><span><slot></slot></span>
`);

define("drawing-canvas", () => `
  <style>
    :host {
      display: flex;
      align-items: flex-end;
      flex: 1;
      min-width: 0;
      box-sizing: border-box;
      border: 2px solid #fff;
      border-top: 1px solid #a8a8a8;
      border-left: 1px solid #a8a8a8;
      background: #000;
    }
    svg { display: block; margin: 0 0 7px 7px; overflow: visible; }
  </style>
  <svg width="96" height="96" viewBox="0 0 96 96" fill="none" stroke="#fff" font-family="Open Sans, sans-serif" font-weight="300" font-size="17">
    <path d="M4.500 81.500h10v9h-10zM9.500 81V37M15 86.500h44M4.500 36.500h10l-5-12zM7.500 36l2-10 2 10M58.500 81.500v9l12-4.500zM59 84l10 2-10 2"/>
    <text x="7" y="16" fill="#fff" stroke="none">Y</text>
    <text x="80" y="93" fill="#fff" stroke="none">X</text>
  </svg>
`);

define("command-window", () => `
  <style>
    :host { display: flex; height: 59px; background: #fff; }
    .grip { width: 14px; padding: 2px 0 0; box-sizing: border-box; background: #a2a2a2; border-radius: 2px; }
    .grip::before { content: ""; display: block; width: 12px; height: 4px; margin: 0 auto; background: ${GRIP_DOTS}; }
    .body { flex: 1; min-width: 0; }
    .history { display: flex; height: 40px; border-bottom: 1px solid #999; margin-left: 2px; }
    pre { flex: 1; margin: 0; padding-top: 1px; font: 13px/16px "Liberation Mono", monospace; color: #111; }
    .vscroll { display: flex; flex-direction: column; justify-content: space-between; width: 16px; background: #f0f0f0; }
    .entry { display: flex; height: 18px; margin-left: 2px; }
    input { flex: 1; min-width: 0; border: 0; padding: 0; outline: 0; font: 13px "Liberation Mono", monospace; }
    .hscroll { display: flex; align-items: center; width: 70px; margin-right: 16px; background: #f0f0f0; }
    .hscroll i { width: 17px; height: 17px; margin-right: auto; background: #cdcdcd; }
    button { display: grid; place-items: center; width: 16px; height: 18px; padding: 0; border: 0; background: none; overflow: hidden; }
    .hscroll button { width: 20px; }
  </style>
  <div class="grip"></div>
  <div class="body">
    <div class="history">
      <pre>Command:
Command:</pre>
      <div class="vscroll">
        <button type="button" aria-label="Scroll up">${svg("up")}</button>
        <button type="button" aria-label="Scroll down">${svg("down")}</button>
      </div>
    </div>
    <div class="entry">
      <input type="text" aria-label="Command">
      <div class="hscroll">
        <button type="button" aria-label="Scroll left">${svg("left")}</button><i></i>
        <button type="button" aria-label="Scroll right">${svg("right")}</button>
      </div>
    </div>
  </div>
`);

const statusCells = (list, on = "") => list.split(" ").map(name =>
  `<button type="button" aria-label="${name}"${on.split(" ").includes(name) ? ' class="on"' : ""}>${svg(name, 18)}</button>`
).join("");

define("status-bar", () => `
  <style>
    :host {
      display: flex;
      height: 21px;
      border-top: 1px solid #000;
      background: linear-gradient(#a3a3a3, #7c7c7c);
      font: 11px/22px "Liberation Sans", sans-serif;
      color: #111;
    }
    .coords { width: 142px; padding-left: 12px; white-space: pre; }
    .cells { display: flex; margin-right: 11px; border-right: 1px solid #555; }
    .toggles { margin-right: auto; }
    button {
      display: flex;
      align-items: center;
      justify-content: center;
      width: 22px;
      padding: 0;
      border: 0;
      border-left: 1px solid #555;
      background: linear-gradient(#c2c2c2, #a0a0a0);
      color: inherit;
      font: inherit;
      overflow: hidden;
    }
    button.on { background: linear-gradient(#d9eff5, #8fc4d3); }
    .scale { width: 51px; gap: 2px; }
    .tight { margin-right: 5px; }
    .elev { width: 91px; padding: 0 2px; box-sizing: border-box; border-left: 1px solid #555; color: #444; background: #999; display: flex; justify-content: space-between; }
    .cells.recess { margin: 2px 6px 2px -2px; border: 1px solid #777; background: #8e8e8e; }
    .recess button { width: 20px; border: 0; background: none; }
    .cells.end { margin: 0; }
    .end .arrow { width: 12px; }
  </style>
  <div class="coords">5.277,  8.153, 0.000</div>
  <div class="cells toggles">${statusCells("snap grid ortho polar osnap otrack ducs dyn lwt qp", "osnap otrack")}</div>
  <div class="cells">${statusCells("model layout qlayout qdraw", "model")}</div>
  <div class="cells">${statusCells("pan zoom wheel motion")}</div>
  <div class="cells tight">
    <button type="button" class="scale">${svg("scalefig", 16)}<span>1:1</span>${svg("darkdrop", 12)}</button>
    ${statusCells("annovis annoauto")}
  </div>
  <div class="cells">
    ${statusCells("gear unlock")}
    <div class="elev"><span>Elevation:</span><span>+0.000</span></div>
    ${statusCells("zstack")}
  </div>
  <div class="cells recess">${statusCells("annsheets bulb")}</div>
  <div class="cells end">
    <button type="button" class="arrow" aria-label="Status menu">${svg("darkdrop", 9)}</button>
    ${statusCells("cleanscr")}
  </div>
`);

// no background of its own: the desktop's dark one shows through
define("task-bar", () => `
  <style>
    :host { display: flex; height: 40px; color: #fff; }
    button { display: grid; place-items: center; width: 48px; padding: 0; border: 0; background: none; }
    label {
      display: flex;
      align-items: center;
      gap: 10px;
      box-sizing: border-box;
      width: 344px;
      padding: 0 12px;
      border: 1px solid #bdbdbd;
      background: #f2f2f2;
    }
    input { flex: 1; min-width: 0; border: 0; padding: 0; background: none; outline: 0; font: 14px "Open Sans", "Noto Sans", sans-serif; }
    input::placeholder { color: #333; opacity: 1; }
    .apps { display: flex; flex: 1; gap: 1px; padding-left: 1px; }
    .apps .run { border-bottom: 2px solid #76b9ed; width: 40px; margin: 0 4px; padding-top: 2px; }
    .apps .run.here { width: 48px; margin: 0; background: #505050; }
    .weather { display: flex; align-items: center; gap: 9px; font-size: 13px; margin-right: 8px; }
    .weather a { display: flex; gap: 9px; color: inherit; text-decoration: none; }
    .tray { display: flex; }
    .tray button { width: 24px; }
    .clock { display: flex; flex-direction: column; justify-content: center; width: 70px; margin-right: 6px; text-align: center; color: #fff; font-size: 11px; line-height: 18px; }
    .tray .notice { position: relative; width: 44px; margin-right: 4px; border-right: 1px solid #aaa; }
    .badge {
      position: absolute;
      right: 13px;
      bottom: 4px;
      width: 15px;
      border: 1px solid #ddd;
      border-radius: 50%;
      background: #777;
      color: #fff;
      font: 10px/15px "Open Sans", sans-serif;
    }
  </style>
  <button type="button" aria-label="Start">${svg("windows", 17)}</button>
  <label>${svg("search", 17)}<input type="search" placeholder="Type here to search" aria-label="Search"></label>
  <div class="apps">
    <button type="button" aria-label="Task view">${svg("taskview", 18)}</button>
    <button type="button" class="run" aria-label="File Explorer">${svg("folder", 22)}</button>
    <button type="button" aria-label="Edge">${svg("edge", 24)}</button>
    <button type="button" class="run" aria-label="Word">${svg("word", 24)}</button>
    <button type="button" class="run here" aria-label="Land Desktop">${svg("ldc", 24)}</button>
  </div>
  <div class="weather">${svg("weather", 22)}<a href="#weather"><span>25°C</span><span>Berawan</span></a></div>
  <div class="tray">
    <button type="button" aria-label="Hidden icons">${svg("trayup", 16)}</button>
    <button type="button" aria-label="Battery">${svg("battery", 17)}</button>
    <button type="button" aria-label="Network">${svg("wifi", 15)}</button>
    <button type="button" aria-label="Volume">${svg("sound", 16)}</button>
    <div class="clock"><span>10:55</span><span>13/02/2022</span></div>
    <button type="button" class="notice" aria-label="Notifications">${svg("notice", 17)}<span class="badge">1</span></button>
  </div>
`);

define("site-watermark", () => `
  <style>
    :host {
      display: flex;
      align-items: flex-end;
      gap: 4px;
      box-sizing: border-box;
      height: 51px;
      padding: 0 8px;
      background: rgba(255, 255, 255, 0.36);
      pointer-events: none;
    }
    b { color: #1d4560; font: 600 42px/48px "Open Sans", sans-serif; }
    span { padding-bottom: 8px; color: #222; font-size: 14px; line-height: 20px; }
  </style>
  <b>Geosai</b><span>https://geosai.my.id</span>
`);

define("group-box", el => `
  <style>
    :host { display: block; }
    fieldset { box-sizing: border-box; height: 100%; min-width: 0; margin: 0; padding: 0; border: 1px solid #dcdcdc; }
    legend { margin-left: 5px; padding: 0 2px; line-height: 16px; }
  </style>
  <fieldset><legend>${el.getAttribute("legend")}</legend><slot></slot></fieldset>
`);

const CHECKS = `
  input[type="radio"], input[type="checkbox"] {
    appearance: none;
    flex: none;
    box-sizing: border-box;
    width: 13px;
    height: 13px;
    margin: 0;
    border: 1px solid #333;
    background: #fff;
  }
  input[type="radio"] { border-radius: 50%; }
  input[type="radio"]:checked { background: radial-gradient(circle, #333 3px, #fff 4px); }
`;

const MARKERS = {
  dot: `<path d="M17.500 15v3M16 16.500h3" stroke="#000"/>`,
  none: "",
  plus: `<path d="M6 16.500h23M17.500 5v23" stroke="#000"/>`,
  cross: `<path d="M8 7l19 19M27 7L8 26" stroke="#000"/>`,
  tick: `<path d="M16.500 5v12" stroke="#000"/>`,
  square: `<path d="M6.500 6.500h21v20h-21z" stroke="#000"/>`,
  ring: `<circle cx="17.500" cy="16.500" r="11.500" stroke="#000"/>`
};

// one marker picture with its tick box or radio under it
define("marker-choice", el => `
  <style>
    :host { display: flex; flex-direction: column; align-items: center; gap: 8px; width: 36px; }
    button {
      box-sizing: border-box;
      width: 36px;
      height: 34px;
      padding: 0;
      border: 1px solid #fff;
      border-right-color: #696969;
      border-bottom-color: #696969;
      background: #f0f0f0;
    }
    :host([checked]) button { border-color: #696969 #fff #fff #696969; }
    svg { display: block; }
    ${CHECKS}
  </style>
  <button type="button" aria-label="${el.getAttribute("shape")}">
    <svg width="34" height="32" viewBox="0 0 34 32" fill="none" aria-hidden="true">${MARKERS[el.getAttribute("shape")]}</svg>
  </button>
  <input type="${el.getAttribute("type") || "radio"}" aria-label="${el.getAttribute("shape")}" ${el.hasAttribute("checked") ? "checked" : ""}>
`, (root, el) => {
  root.querySelector("button").addEventListener("click", () => root.querySelector("input").click());
});

const TABS = ["Create", "Insert", "Update", "Coords", "Description Keys", "Marker", "Text", "Preferences"];

define("point-dialog", () => `
  <style>
    :host {
      display: block;
      width: 518px;
      background: #f0f0f0;
      color: #000;
      font: 11px/16px Roboto, "Liberation Sans", sans-serif;
    }
    header { display: flex; align-items: center; gap: 5px; height: 25px; padding: 0 6px 0 4px; background: #fff; }
    h1 { flex: 1; margin: 0; font: 12px/24px "Open Sans", "Noto Sans", sans-serif; }
    header button { display: grid; place-items: center; width: 18px; height: 18px; padding: 0; border: 0; background: none; }
    main { padding: 7px 7px 8px 6px; }
    .tabs { display: flex; align-items: flex-end; padding-left: 2px; }
    .tabs button {
      box-sizing: border-box;
      min-width: 42px;
      height: 19px;
      padding: 0 5px;
      border: 1px solid #dcdcdc;
      border-width: 1px 1px 0 0;
      background: #f0f0f0;
      color: #000;
      font: inherit;
      text-align: left;
    }
    .tabs button:first-child { border-left-width: 1px; }
    .tabs button.current {
      position: relative;
      height: 22px;
      margin-bottom: -1px;
      padding: 0 6px 4px;
      background: #fff;
    }
    .page {
      box-sizing: border-box;
      margin-right: 1px;
      padding: 10px 9px 14px;
      border: 1px solid #dcdcdc;
      background: #fff;
    }
    p { margin: 0 0 10px; }
    label { display: flex; align-items: center; gap: 3px; }
    .row { display: flex; margin-left: 6px; }
    .kind { margin-bottom: 12px; }
    .kind label { width: 156px; white-space: nowrap; }
    .boxes { gap: 9px; }
    .boxes group-box:first-child { width: 228px; }
    .boxes group-box:last-child { width: 141px; }
    .markers { display: flex; justify-content: center; gap: 6px; padding: 5px 0 8px; }
    .size { width: 408px; margin: 6px 0 7px; }
    .lines { display: flex; flex-direction: column; gap: 10px; padding: 13px 0 19px 11px; }
    .measure { display: flex; align-items: center; margin-top: -4px; padding-left: 20px; }
    .measure label { width: 60px; }
    .measure input {
      box-sizing: border-box;
      width: 72px;
      height: 20px;
      margin-right: 6px;
      padding: 0 2px;
      border: 1px solid #7a7a7a;
      font: inherit;
    }
    ${CHECKS}
    .tick { position: relative; }
    .tick svg { position: absolute; left: 1px; top: 2px; pointer-events: none; }
    .tick input:not(:checked) + svg { display: none; }
    footer { display: flex; justify-content: flex-end; gap: 8px; margin-top: 9px; }
    footer button {
      box-sizing: border-box;
      width: 73px;
      height: 21px;
      padding: 0;
      border: 1px solid #adadad;
      background: #e1e1e1;
      color: #000;
      font: inherit;
    }
    footer button.ok { border: 2px solid #0078d7; }
  </style>
  <header>
    ${svg("pointapp", 15)}
    <h1>Point Settings</h1>
    <button type="button" class="close" aria-label="Close">${svg("closedark")}</button>
  </header>
  <main>
    <div class="tabs" role="tablist">
      ${TABS.map(t => `<button type="button" role="tab"${t === "Marker" ? ' class="current"' : ""}>${t}</button>`).join("")}
    </div>
    <div class="page">
      <p>Specify the Size and Shape of the Point Marker Symbol.</p>
      <div class="row kind">
        <label><input type="radio" name="kind" checked>Use Custom Marker</label>
        <label><input type="radio" name="kind">Use AutoCAD POINT for Marker</label>
      </div>
      <div class="row boxes">
        <group-box legend="Custom Marker Style">
          <div class="markers">
            <marker-choice shape="dot" checked></marker-choice>
            <marker-choice shape="none"></marker-choice>
            <marker-choice shape="plus"></marker-choice>
            <marker-choice shape="cross"></marker-choice>
            <marker-choice shape="tick"></marker-choice>
          </div>
        </group-box>
        <group-box legend="Superimposed">
          <div class="markers">
            <marker-choice shape="square" type="checkbox"></marker-choice>
            <marker-choice shape="ring" type="checkbox"></marker-choice>
          </div>
        </group-box>
      </div>
      <group-box class="size" legend="Custom Marker Size">
        <div class="lines">
          <label><input type="radio" name="size">Size Relative To Screen</label>
          <label><input type="radio" name="size" checked>Size In Absolute Units</label>
          <div class="measure">
            <label for="units">Size:</label>
            <input type="text" id="units" value="5.00">
            <span>Units</span>
          </div>
        </div>
      </group-box>
      <div class="row">
        <label class="tick">
          <input type="checkbox" checked>
          <svg width="11" height="11" viewBox="0 0 11 11"><path d="M1.500 5.500L4 8l5.500-5.500" fill="none" stroke="#222" stroke-width="1.200"/></svg>
          Align Marker With Text Rotation
        </label>
      </div>
    </div>
    <footer>
      <button type="button" class="ok">OK</button>
      <button type="button">Cancel</button>
      <button type="button">Help</button>
    </footer>
  </main>
`, (root, el) => {
  root.querySelector(".close").addEventListener("click", () => el.remove());
});

define("cad-desktop", () => `
  <style>
    :host { display: flex; flex-direction: column; height: 100vh; background: #292929; }
    .app { position: relative; display: flex; flex-direction: column; flex: 1; min-height: 0; background: #696969; }
    app-logo { position: absolute; left: 0; top: 1px; }
    .bars { display: flex; flex-direction: column; gap: 3px; }
    .strip { display: flex; gap: 2px; overflow: hidden; }
    .middle { display: flex; flex: 1; min-height: 0; }
    .palettes { display: flex; flex-direction: column; gap: 6px; padding: 9px 3px 5px 1px; }
    .main { display: flex; flex-direction: column; flex: 1; min-width: 0; }
    .work { display: flex; align-items: stretch; gap: 4px; flex: 1; min-height: 0; padding: 4px 3px 4px 0; }
    .work > tool-bar { align-self: flex-start; }
    .right { display: flex; flex-direction: column; }
    command-window { margin-left: 1px; }
    .layer { width: 299px; padding-left: 2px; }
    .layer cad-icon:last-of-type { margin: 0 1px 0 -3px; }
    .color { width: 150px; }
    .ltype { width: 160px; }
    .lweight { width: 126px; }
    .plot { width: 120px; padding-left: 9px; }
    .style { width: 119px; padding-left: 18px; }
    .color cad-icon { margin: 0 1px 0 -3px; }
    hr { flex: none; height: 1px; margin: 0 5px 0 0; border: 0; background: #000; }
    .ltype hr { width: 60px; }
    .lweight hr { width: 35px; }
    .modal { position: absolute; inset: 0; display: grid; place-items: center; pointer-events: none; }
    point-dialog { pointer-events: auto; }
    site-watermark { position: absolute; right: 0; bottom: 2px; z-index: 1; }
    task-bar { position: relative; z-index: 2; }
  </style>
  <div class="app">
    <title-bar></title-bar>
    <menu-bar></menu-bar>
    <app-logo></app-logo>
    <div class="bars">
      <div class="strip">
        <tool-bar>${tools("new open save | print preview publish globe | match blockedit | undo drop redo drop | palette center toolpal sheetset markup calc | help")}</tool-bar>
        <tool-bar>
          ${tools("dlinear daligned darc dord | dradius djog ddiam dang | dquick dbase dcont dspace dbreak | tol cmark inspect jogline | dedit dtext dupdate |")}
          <tool-combo class="style" label="Dimension style" value="Standard"></tool-combo>
          ${tools("dstyle")}
        </tool-bar>
      </div>
      <div class="strip">
        <tool-bar>
          ${tools("layers")}
          <tool-combo class="layer" label="Layer" value="0">
            <cad-icon name="bulb" size="16"></cad-icon>
            <cad-icon name="sun" size="17"></cad-icon>
            <cad-icon name="freeze" size="17"></cad-icon>
            <cad-icon name="lock" size="17"></cad-icon>
            <cad-icon name="swatch" size="18"></cad-icon>
          </tool-combo>
          ${tools("layobj layprev laystate")}
        </tool-bar>
        <tool-bar>
          <tool-combo class="color" label="Color" value="ByLayer"><cad-icon name="swatch"></cad-icon></tool-combo>
          <tool-sep></tool-sep>
          <tool-combo class="ltype" label="Linetype" value="ByLayer"><hr></tool-combo>
          <tool-sep></tool-sep>
          <tool-combo class="lweight" label="Lineweight" value="ByLayer"><hr></tool-combo>
          <tool-sep></tool-sep>
          <tool-combo class="plot" label="Plot style" value="ByColor"></tool-combo>
        </tool-bar>
        <tool-bar>
          ${tools("tstyle")}
          <tool-combo class="style" label="Text style" value="Standard"></tool-combo>
          ${tools("| dstyle")}
          <tool-combo class="style" label="Dimension style" value="Standard"></tool-combo>
          ${tools("| tabstyle")}
          <tool-combo label="Table style" value="Standard"></tool-combo>
        </tool-bar>
      </div>
    </div>
    <div class="middle">
      <div class="palettes">
        <side-palette>Properties</side-palette>
        <side-palette>Task Pane</side-palette>
      </div>
      <div class="main">
        <div class="work">
          <tool-bar vertical>${tools("line xline pline polygon rect arc circle cloud spline ellipse earc insert block point hatch gradient region table mtext")}</tool-bar>
          <drawing-canvas></drawing-canvas>
          <div class="right">
            <tool-bar vertical>${tools("erase copy mirror offset array move rotate scale stretch trim extend breakpt breaks join chamfer fillet explode")}</tool-bar>
            <tool-bar vertical>${tools("front back above under")}</tool-bar>
          </div>
        </div>
        <command-window></command-window>
      </div>
    </div>
    <status-bar></status-bar>
    <div class="modal"><point-dialog></point-dialog></div>
  </div>
  <task-bar></task-bar>
  <site-watermark></site-watermark>
`);
</script>
</body>
</html>
